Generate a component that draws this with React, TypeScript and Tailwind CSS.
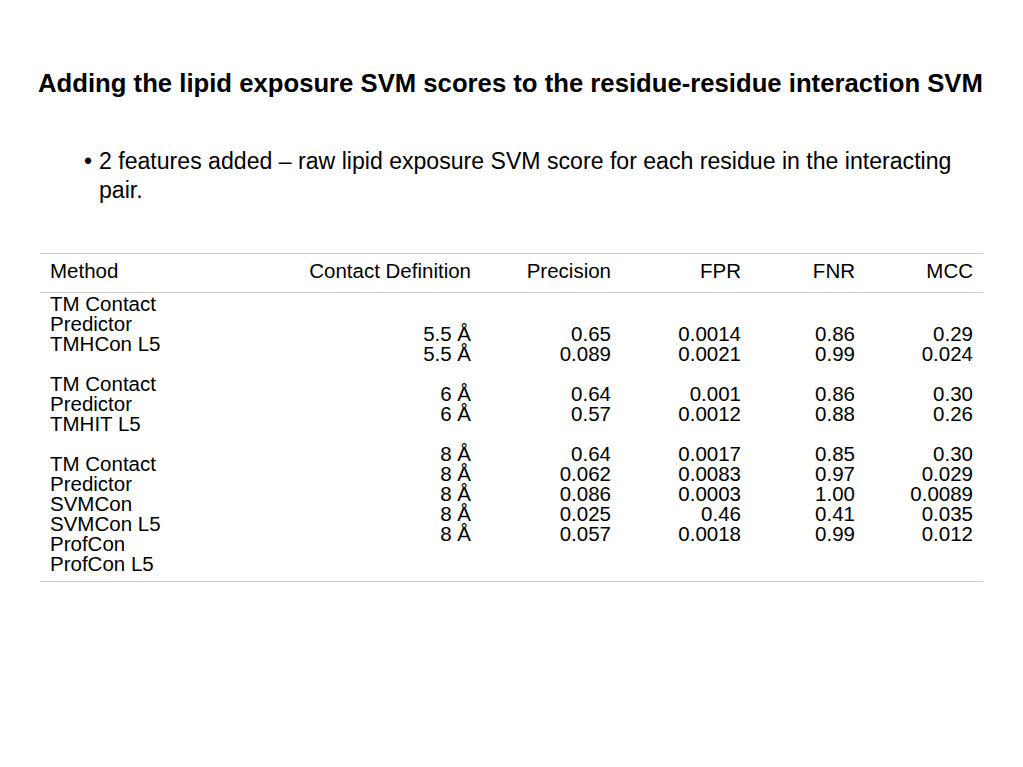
import React from "react";

const methodLines = [
  "TM Contact", "Predictor", "TMHCon L5", "\u00a0",
  "TM Contact", "Predictor", "TMHIT L5", "\u00a0",
  "TM Contact", "Predictor", "SVMCon", "SVMCon L5", "ProfCon", "ProfCon L5",
];
const contact = ["5.5 Å", "5.5 Å", "\u00a0", "6 Å", "6 Å", "\u00a0", "8 Å", "8 Å", "8 Å", "8 Å", "8 Å"];
const precision = ["0.65", "0.089", "\u00a0", "0.64", "0.57", "\u00a0", "0.64", "0.062", "0.086", "0.025", "0.057"];
const fpr = ["0.0014", "0.0021", "\u00a0", "0.001", "0.0012", "\u00a0", "0.0017", "0.0083", "0.0003", "0.46", "0.0018"];
const fnr = ["0.86", "0.99", "\u00a0", "0.86", "0.88", "\u00a0", "0.85", "0.97", "1.00", "0.41", "0.99"];
const mcc = ["0.29", "0.024", "\u00a0", "0.30", "0.26", "\u00a0", "0.30", "0.029", "0.0089", "0.035", "0.012"];

const Col = ({ lines, right }: { lines: string[]; right?: boolean }) => (
  <div className={`flex flex-col justify-center px-[10px] ${right ? "text-right" : "text-left"}`}>
    {lines.map((l, i) => (
      <div key={i} className="h-[20px] leading-[20px] whitespace-nowrap">{l}</div>
    ))}
  </div>
);

export default function App() {
  return (
    <div
      className="w-[1023px] h-[767px] bg-white text-black"
      style={{ fontFamily: '"Liberation Sans", Arial, sans-serif' }}
    >
      <div className="pt-[68px] pl-[38px]">
        <h1 className="text-[25.7px] font-bold leading-[30px] whitespace-nowrap">
          Adding the lipid exposure SVM scores to the residue-residue interaction SVM
        </h1>
      </div>
      <div className="mt-[49px] pl-[84px] flex text-[23.1px] leading-[29px]">
        <span className="w-[15px] shrink-0">•</span>
        <p className="w-[880px]">
          2 features added – raw lipid exposure SVM score for each residue in the interacting pair.
        </p>
      </div>
      <div className="mt-[48px] ml-[40px] w-[943px] text-[20.5px] leading-[20px]">
        <div className="grid grid-cols-[250px_191px_140px_130px_114px_118px] border-t border-b border-[#cccccc] h-[40px] pt-[7px]">
          <div className="px-[10px]">Method</div>
          <div className="px-[10px] text-right">Contact Definition</div>
          <div className="px-[10px] text-right">Precision</div>
          <div className="px-[10px] text-right">FPR</div>
          <div className="px-[10px] text-right">FNR</div>
          <div className="px-[10px] text-right">MCC</div>
        </div>
        <div className="grid grid-cols-[250px_191px_140px_130px_114px_118px] border-b border-[#cccccc] pt-[1px] pb-[7px]">
          <Col lines={methodLines} />
          <Col lines={contact} right />
          <Col lines={precision} right />
          <Col lines={fpr} right />
          <Col lines={fnr} right />
          <Col lines={mcc} right />
        </div>
      </div>
    </div>
  );
}
